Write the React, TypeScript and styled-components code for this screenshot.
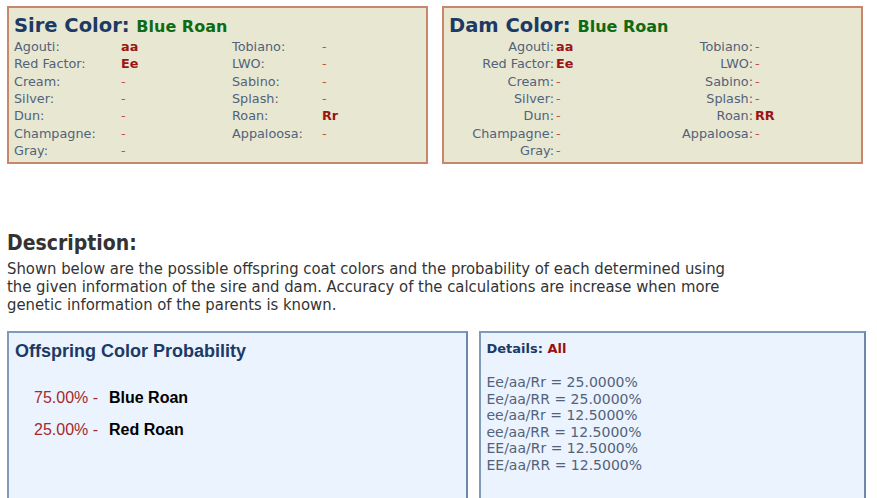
import React from 'react';
import styled, { createGlobalStyle } from 'styled-components';

const GlobalStyle = createGlobalStyle`
  html, body {
    margin: 0;
    padding: 0;
    background: #ffffff;
  }
  body {
    font-family: 'DejaVu Sans', Verdana, sans-serif;
  }
`;

const Page = styled.div`
  padding: 6px 11px 0 7px;
  height: 498px;
  overflow: hidden;
  box-sizing: border-box;
`;

const ParentRow = styled.div`
  display: flex;
  gap: 14px;
`;

const ParentBox = styled.div`
  width: 421px;
  height: 158px;
  box-sizing: border-box;
  background: #e8e7d1;
  border: 2px solid #c8866a;
  padding: 5px 5px 4px;
`;

const ParentTitle = styled.h2`
  margin: 0 0 -2px;
  font-family: 'DejaVu Sans', Verdana, sans-serif;
  font-size: 19.5px;
  font-weight: bold;
  color: #1c3a63;
  line-height: 26px;

  span {
    color: #0f6b12;
    font-size: 16px;
  }
`;

const TraitGrid = styled.div<{ $right?: boolean }>`
  display: grid;
  grid-template-columns: ${p => (p.$right ? '107px 96px 103px 1fr' : '107px 111px 90px 1fr')};
  grid-auto-rows: 17.35px;
  font-size: 12.8px;
  line-height: 17.35px;
`;

const TraitLabel = styled.div<{ $right?: boolean }>`
  color: #52627a;
  text-align: ${p => (p.$right ? 'right' : 'left')};
  padding-right: ${p => (p.$right ? '2px' : '0')};
  white-space: nowrap;
`;

const TraitValue = styled.div<{ $set?: boolean }>`
  color: ${p => (p.$set ? '#9b1515' : '#c0524a')};
  font-weight: ${p => (p.$set ? 'bold' : 'normal')};
`;

const Description = styled.section`
  margin-top: 66px;
`;

const DescHeading = styled.h3`
  margin: 0 0 4px;
  font-family: 'DejaVu Sans Condensed', 'DejaVu Sans', sans-serif;
  font-stretch: condensed;
  font-size: 21px;
  font-weight: bold;
  color: #333;
  line-height: 26px;
`;

const DescText = styled.p`
  margin: 0;
  width: 736px;
  font-family: 'DejaVu Sans Condensed', 'DejaVu Sans', sans-serif;
  font-stretch: condensed;
  font-size: 16.5px;
  line-height: 18px;
  color: #333;
`;

const ResultRow = styled.div`
  display: flex;
  gap: 11px;
  margin-top: 17px;
`;

const ResultBox = styled.div<{ $w: number }>`
  width: ${p => p.$w}px;
  height: 200px;
  box-sizing: border-box;
  background: #ebf3ff;
  border: 2px solid #7f9bb8;
  border-right-color: #6d88a8;
`;

const OffspringBox = styled(ResultBox)`
  padding: 7px 6px;
  font-family: 'Liberation Sans', Arial, sans-serif;
`;

const OffspringTitle = styled.h2`
  margin: 0 0 20px;
  font-size: 18px;
  font-weight: bold;
  color: #1c3a63;
  line-height: 22px;
`;

const OffspringRow = styled.div`
  display: flex;
  gap: 12px;
  padding-left: 19px;
  font-size: 16px;
  line-height: 32px;
`;

const Pct = styled.span`
  color: #a52a2a;
  width: 63px;
  white-space: nowrap;
`;

const ColorName = styled.span`
  color: #000;
  font-weight: bold;
`;

const DetailsBox = styled(ResultBox)`
  padding: 7px 5px;
  font-family: 'DejaVu Sans', Verdana, sans-serif;
`;

const DetailsTitle = styled.div`
  font-size: 13px;
  font-weight: bold;
  color: #1c3a63;
  line-height: 18px;
  margin-bottom: 16px;

  span {
    color: #9b1010;
  }
`;

const DetailLine = styled.div`
  font-size: 14px;
  color: #52627a;
  line-height: 16.6px;
`;

type Trait = [string, string];

const sireLeft: Trait[] = [
  ['Agouti:', 'aa'],
  ['Red Factor:', 'Ee'],
  ['Cream:', '-'],
  ['Silver:', '-'],
  ['Dun:', '-'],
  ['Champagne:', '-'],
  ['Gray:', '-'],
];

const sireRight: Trait[] = [
  ['Tobiano:', '-'],
  ['LWO:', '-'],
  ['Sabino:', '-'],
  ['Splash:', '-'],
  ['Roan:', 'Rr'],
  ['Appaloosa:', '-'],
];

const damRight: Trait[] = sireRight.map(([k, v]) => [k, k === 'Roan:' ? 'RR' : v]);

const details = [
  'Ee/aa/Rr = 25.0000%',
  'Ee/aa/RR = 25.0000%',
  'ee/aa/Rr = 12.5000%',
  'ee/aa/RR = 12.5000%',
  'EE/aa/Rr = 12.5000%',
  'EE/aa/RR = 12.5000%',
];

const ParentCard = ({ title, color, left, right, alignRight }: {
  title: string;
  color: string;
  left: Trait[];
  right: Trait[];
  alignRight?: boolean;
}) => {
  const cells: React.ReactNode[] = [];
  left.forEach((l, i) => {
    const r = right[i];
    cells.push(<TraitLabel key={'l' + i} $right={alignRight}>{l[0]}</TraitLabel>);
    cells.push(<TraitValue key={'lv' + i} $set={l[1] !== '-'}>{l[1]}</TraitValue>);
    cells.push(<TraitLabel key={'r' + i} $right={alignRight}>{r ? r[0] : ''}</TraitLabel>);
    cells.push(<TraitValue key={'rv' + i} $set={!!r && r[1] !== '-'}>{r ? r[1] : ''}</TraitValue>);
  });
  return (
    <ParentBox>
      <ParentTitle>{title} <span>{color}</span></ParentTitle>
      <TraitGrid $right={alignRight}>{cells}</TraitGrid>
    </ParentBox>
  );
};

const App = () => {
  return (
    <Page>
      <GlobalStyle />
      <ParentRow>
        <ParentCard title="Sire Color:" color="Blue Roan" left={sireLeft} right={sireRight} />
        <ParentCard title="Dam Color:" color="Blue Roan" left={sireLeft} right={damRight} alignRight />
      </ParentRow>

      <Description>
        <DescHeading>Description:</DescHeading>
        <DescText>
          Shown below are the possible offspring coat colors and the probability of each determined using
          the given information of the sire and dam. Accuracy of the calculations are increase when more
          genetic information of the parents is known.
        </DescText>
      </Description>

      <ResultRow>
        <OffspringBox $w={462}>
          <OffspringTitle>Offspring Color Probability</OffspringTitle>
          <OffspringRow><Pct>75.00% -</Pct><ColorName>Blue Roan</ColorName></OffspringRow>
          <OffspringRow><Pct>25.00% -</Pct><ColorName>Red Roan</ColorName></OffspringRow>
        </OffspringBox>
        <DetailsBox $w={387}>
          <DetailsTitle>Details: <span>All</span></DetailsTitle>
          {details.map(d => <DetailLine key={d}>{d}</DetailLine>)}
        </DetailsBox>
      </ResultRow>
    </Page>
  );
};

export default App;
